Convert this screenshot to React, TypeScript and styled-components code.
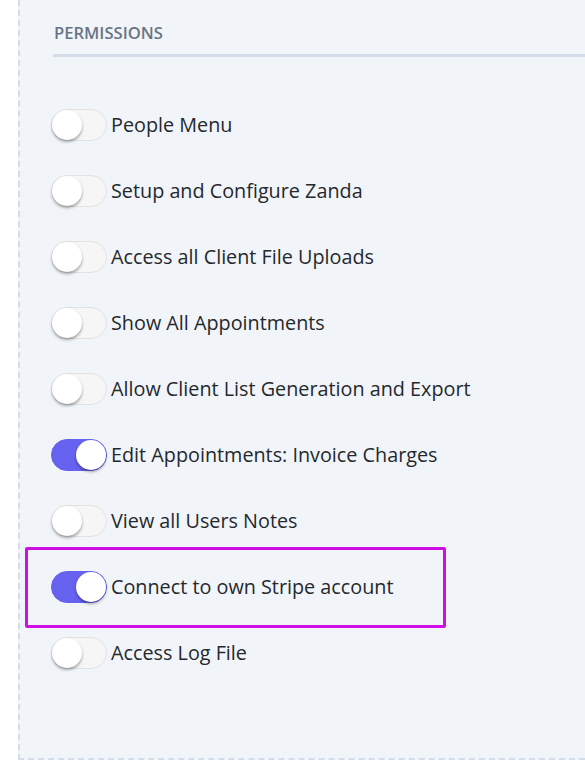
import React from "react";
import styled, { createGlobalStyle } from "styled-components";

const GlobalStyle = createGlobalStyle`
  html, body {
    margin: 0;
    padding: 0;
    background: #ffffff;
    font-family: "Open Sans", "Noto Sans", sans-serif;
  }
`;

const Page = styled.div`
  width: 585px;
  height: 782px;
  overflow: hidden;
  background: #ffffff;
`;

const Panel = styled.section`
  margin-left: 18px;
  height: 760px;
  padding: 22px 0 0 31px;
  box-sizing: border-box;
  background: #f1f5fa;
  border-left: 2px dashed #d3dde9;
  border-bottom: 2px dashed #d3dde9;
`;

const SectionTitle = styled.h3`
  margin: 0 0 0 2px;
  padding: 0 0 10px 1px;
  font-size: 16.6px;
  font-weight: 600;
  color: #697482;
  line-height: 22px;
  border-bottom: 3px solid #d3dde9;
`;

const PermissionList = styled.ul`
  list-style: none;
  margin: 0;
  padding: 52px 0 0 0;
  display: flex;
  flex-direction: column;
  gap: 34px;
`;

const PermissionRow = styled.li`
  position: relative;
  display: flex;
  align-items: center;
  height: 32px;
`;

const Highlight = styled.div`
  position: absolute;
  left: -26px;
  top: -24px;
  width: 415px;
  height: 75px;
  border: 3px solid #d10de6;
  border-radius: 2px;
  pointer-events: none;
`;

const Track = styled.span<{ on: boolean }>`
  position: relative;
  flex: none;
  width: 56px;
  height: 32px;
  box-sizing: border-box;
  border-radius: 16px;
  background: ${(p) => (p.on ? "#6761ef" : "#f6f6f6")};
  border: 1px solid ${(p) => (p.on ? "#6761ef" : "#e2e2e2")};
`;

const Knob = styled.span<{ on: boolean }>`
  position: absolute;
  top: 0px;
  left: ${(p) => (p.on ? "24px" : "0px")};
  width: 30px;
  height: 30px;
  border-radius: 50%;
  background: #ffffff;
  box-shadow: 0 2px 3px rgba(0, 0, 0, 0.35);
`;

const Label = styled.span`
  margin-left: 4px;
  font-size: 19.8px;
  color: #25282c;
  line-height: 28px;
`;

const permissions = [
  { label: "People Menu", on: false },
  { label: "Setup and Configure Zanda", on: false },
  { label: "Access all Client File Uploads", on: false },
  { label: "Show All Appointments", on: false },
  { label: "Allow Client List Generation and Export", on: false },
  { label: "Edit Appointments: Invoice Charges", on: true },
  { label: "View all Users Notes", on: false },
  { label: "Connect to own Stripe account", on: true, highlighted: true },
  { label: "Access Log File", on: false },
];

const App: React.FC = () => {
  return (
    <Page>
      <GlobalStyle />
      <Panel>
        <SectionTitle>PERMISSIONS</SectionTitle>
        <PermissionList>
          {permissions.map((p) => (
            <PermissionRow key={p.label}>
              {p.highlighted ? <Highlight /> : null}
              <Track on={p.on}>
                <Knob on={p.on} />
              </Track>
              <Label>{p.label}</Label>
            </PermissionRow>
          ))}
        </PermissionList>
      </Panel>
    </Page>
  );
};

export default App;
